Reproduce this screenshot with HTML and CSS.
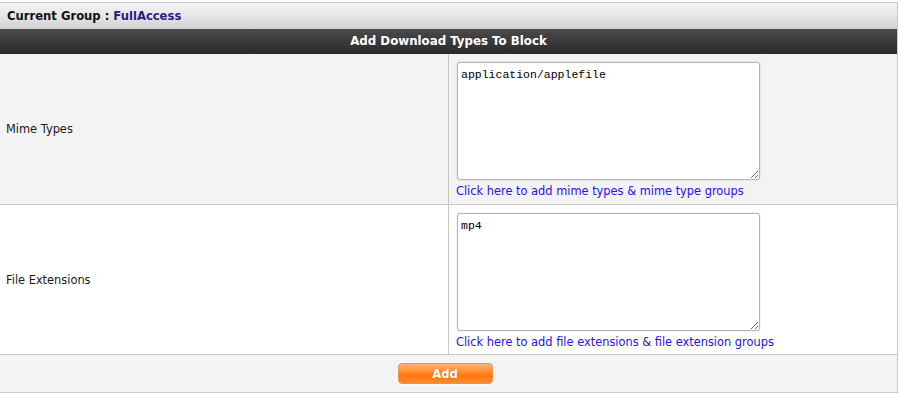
FILE: index.html
```html
<!DOCTYPE html>
<html>
<head>
<meta charset="utf-8">
<link rel="stylesheet" href="styles.css">
</head>
<body>
<div class="panel">
  <div class="group-bar">Current Group : <span class="group-name">FullAccess</span></div>
  <div class="title-bar">Add Download Types To Block</div>
  <div class="row row-grey">
    <div class="label">Mime Types</div>
    <div class="field">
      <textarea class="box">application/applefile</textarea>
      <a class="link" href="#">Click here to add mime types &amp; mime type groups</a>
    </div>
  </div>
  <div class="row row-white">
    <div class="label">File Extensions</div>
    <div class="field">
      <textarea class="box">mp4</textarea>
      <a class="link" href="#">Click here to add file extensions &amp; file extension groups</a>
    </div>
  </div>
  <div class="actions">
    <button class="add-btn" type="button">Add</button>
  </div>
</div>
</body>
</html>
```

FILE: styles.css
```css
html, body {
  margin: 0;
  padding: 0;
  background: #ffffff;
}
body {
  padding-top: 2px;
  font-family: "DejaVu Sans", Verdana, sans-serif;
  font-size: 11.4px;
  color: #111;
}
.panel {
  width: 897px;
  border-top: 1px solid #c8c8c8;
  border-right: 1px solid #c8c8c8;
  border-bottom: 1px solid #c8c8c8;
}
.group-bar {
  height: 26px;
  line-height: 26px;
  padding-left: 7px;
  font-weight: bold;
  font-size: 11.6px;
  color: #111;
  background: linear-gradient(#f3f3f3, #e6e6e6 50%, #d0d0d0);
}
.group-name {
  color: #2b1a86;
}
.title-bar {
  height: 25px;
  line-height: 25px;
  text-align: center;
  font-weight: bold;
  font-size: 11.8px;
  color: #ffffff;
  background: linear-gradient(#4b4b4b, #3a3a3a 50%, #2a2a2a);
}
.row {
  display: flex;
  border-bottom: 1px solid #c8c8c8;
}
.row-grey { background: #f3f3f3; height: 150px; }
.row-white { background: #ffffff; height: 149px; }
.label {
  width: 442px;
  padding-left: 6px;
  display: flex;
  align-items: center;
  border-right: 1px solid #c8c8c8;
  color: #1a1a1a;
}
.field {
  padding: 8px 0 0 8px;
  display: flex;
  flex-direction: column;
  align-items: flex-start;
}
.box {
  box-sizing: border-box;
  width: 303px;
  height: 118px;
  margin: 0;
  padding: 5px 3px;
  border: 1px solid #b4b4b4;
  border-radius: 3px;
  box-shadow: 0 0 2px rgba(0,0,0,0.18);
  background: #fff;
  font-family: "Liberation Mono", "Courier New", monospace;
  font-size: 11.5px;
  line-height: 13px;
  color: #000;
  resize: both;
}
.link {
  margin-top: 4px;
  margin-left: -1px;
  line-height: 14px;
  color: #2a10f0;
  text-decoration: none;
}
.actions {
  height: 37px;
  background: #f3f3f3;
  display: flex;
  align-items: center;
  justify-content: center;
  padding-right: 7px;
}
.add-btn {
  width: 95px;
  height: 21px;
  border: 1px solid #f0904a;
  border-radius: 4px;
  background: linear-gradient(#ffb47a, #ff8a2a 45%, #ff7810 60%, #ff8a30);
  box-shadow: 0 0 0 2px #f8f8f8;
  color: #ffffff;
  font-family: "DejaVu Sans", Verdana, sans-serif;
  font-size: 11.6px;
  font-weight: bold;
  padding: 0;
  text-shadow: 0 0 1px rgba(160,60,0,0.5);
}
```
